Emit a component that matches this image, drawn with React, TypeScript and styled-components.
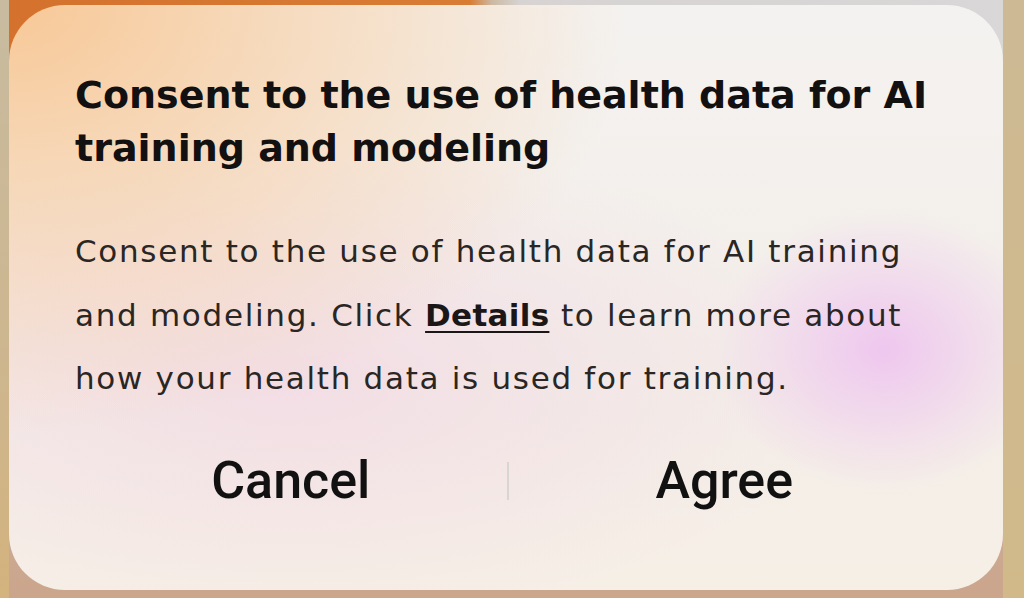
import React from "react";
import styled, { createGlobalStyle } from "styled-components";

const GlobalStyle = createGlobalStyle`
  html, body {
    margin: 0;
    padding: 0;
  }
  body {
    font-family: "DejaVu Sans", "Noto Sans", sans-serif;
    -webkit-font-smoothing: antialiased;
  }
`;

export default function App() {
  return (
    <>
      <GlobalStyle />
      <Backdrop>
        <Dialog role="dialog" aria-labelledby="consent-title">
          <Title id="consent-title">
            Consent to the use of health data for AI training and modeling
          </Title>
          <Message>
            Consent to the use of health data for AI training and modeling.
            Click <DetailsLink href="#details">Details</DetailsLink> to learn
            more about how your health data is used for training.
          </Message>
          <Actions>
            <ActionButton type="button">Cancel</ActionButton>
            <Divider />
            <ActionButton type="button">Agree</ActionButton>
          </Actions>
        </Dialog>
      </Backdrop>
    </>
  );
}

const Backdrop = styled.div`
  box-sizing: border-box;
  width: 1024px;
  height: 598px;
  padding: 5px 21px 8px 9px;
  overflow: hidden;
  background:
    linear-gradient(180deg, #c8bb9f 0%, #cdb68f 60%, #d3b37e 100%) left top / 9px 100% no-repeat,
    linear-gradient(180deg, #cdb994 0%, #d1b98a 100%) right top / 21px 100% no-repeat,
    linear-gradient(90deg, #d4722d 0, #d87c34 470px, #cdb9a3 492px, #d6d3d2 520px, #d9d7d7 100%) left top / 100% 90px no-repeat,
    linear-gradient(180deg, #d6d2cf 0%, #cba58c 100%);
`;

const Dialog = styled.section`
  box-sizing: border-box;
  height: 100%;
  border-radius: 56px;
  padding: 64px 63px 0 66px;
  display: flex;
  flex-direction: column;
  background:
    radial-gradient(ellipse 170px 140px at 88% 59%, rgba(238, 192, 240, 0.85), rgba(238, 194, 240, 0) 100%),
    radial-gradient(ellipse 620px 430px at 0% 0%, rgba(248, 198, 146, 0.95), rgba(248, 206, 160, 0) 100%),
    radial-gradient(ellipse 560px 240px at 28% 64%, rgba(242, 210, 226, 0.6), rgba(242, 210, 226, 0) 100%),
    linear-gradient(180deg, #f4f2f0 0%, #f3eee9 60%, #f6efe6 100%);
`;

const Title = styled.h1`
  margin: 0;
  font-size: 38px;
  line-height: 53px;
  font-weight: 700;
  color: #121010;
`;

const Message = styled.p`
  margin: 45px 0 0;
  font-size: 31px;
  line-height: 63.5px;
  font-weight: 400;
  letter-spacing: 1.7px;
  color: #2a2624;
`;

const DetailsLink = styled.a`
  color: #1a1716;
  font-weight: 700;
  letter-spacing: 0.3px;
  text-decoration: underline;
  text-decoration-thickness: 2px;
  text-underline-offset: 5px;
`;

const Actions = styled.div`
  margin-top: 30px;
  height: 80px;
  display: grid;
  grid-template-columns: 1fr 2px 1fr;
  align-items: center;
`;

const ActionButton = styled.button`
  border: 0;
  background: none;
  padding: 0;
  font-family: Roboto, "Noto Sans", sans-serif;
  font-size: 52px;
  font-weight: 500;
  color: #111;
  cursor: pointer;
  height: 80px;
`;

const Divider = styled.span`
  width: 2px;
  height: 38px;
  background: #d9d5d1;
`;
